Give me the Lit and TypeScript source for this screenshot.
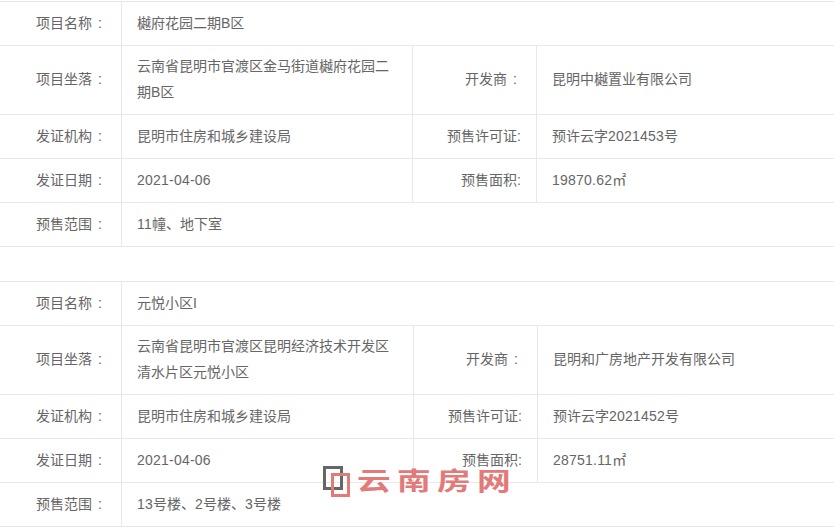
import { LitElement, html, css } from "lit";
import { customElement } from "lit/decorators.js";

interface Project {
  name: string; addr: string[]; dev: string; org: string; permit: string; date: string; area: string; range: string; wide: boolean;
}

const projects: Project[] = [
  { name: "樾府花园二期B区", addr: ["云南省昆明市官渡区金马街道樾府花园二", "期B区"], dev: "昆明中樾置业有限公司", org: "昆明市住房和城乡建设局", permit: "预许云字2021453号", date: "2021-04-06", area: "19870.62㎡", range: "11幢、地下室", wide: false },
  { name: "元悦小区I", addr: ["云南省昆明市官渡区昆明经济技术开发区", "清水片区元悦小区"], dev: "昆明和广房地产开发有限公司", org: "昆明市住房和城乡建设局", permit: "预许云字2021452号", date: "2021-04-06", area: "28751.11㎡", range: "13号楼、2号楼、3号楼", wide: true },
];

@customElement("app-root")
export class AppRoot extends LitElement {
  static styles = css`
    :host {
      display: block; position: relative; width: 834px; height: 528px; overflow: hidden; background: #fff;
      font-family: "Liberation Sans", "Noto Sans CJK SC", sans-serif; font-size: 14px; color: #666;
    }
    .page { display: flex; flex-direction: column; gap: 34px; padding-top: 1px; }
    .table { border-top: 1px solid #e8e8e8; }
    .row { display: grid; grid-template-columns: 121px 291px 124px 1fr; border-bottom: 1px solid #e8e8e8; min-height: 43px; }
    .table.wide .row { grid-template-columns: 121px 292px 124px 1fr; }
    .row.tall { min-height: 68px; }
    .cell { display: flex; align-items: center; line-height: 26px; border-left: 1px solid #e8e8e8; padding: 0 0 2px 15px; }
    .cell.label { justify-content: flex-end; padding: 0 15px 2px 0; }
    .cell.dev { padding-left: 52px; }
    .cell.first { border-left: 0; padding-left: 36px; }
    .cell.span { grid-column: 2 / 5; }
    .colon { margin-left: 6px; }
    .num { letter-spacing: 0.22px; }
    .mark { position: absolute; left: 323px; top: 466px; width: 195px; height: 34px; }
    .mark svg { position: absolute; left: 0; top: 0; }
    .mark span {
      position: absolute; left: 34px; top: -3px; font-size: 25px; line-height: 32px; font-weight: 700;
      color: #e27a7a; white-space: nowrap; letter-spacing: 4.6px; transform: scaleX(1.35); transform-origin: left center;
      font-family: "Noto Sans CJK SC", sans-serif;
    }
  `;

  private digits(text: string) {
    return text.split(/(\d[\d.\-]*)/).map((part, i) => (i % 2 ? html`<span class="num">${part}</span>` : part));
  }

  private first(text: string) {
    return html`<div class="cell first">${text}<span class="colon">:</span></div>`;
  }

  private table(p: Project) {
    return html`<div class="table ${p.wide ? "wide" : ""}">
      <div class="row">${this.first("项目名称")}<div class="cell span">${p.name}</div></div>
      <div class="row tall">${this.first("项目坐落")}
        <div class="cell"><div>${p.addr[0]}<br />${p.addr[1]}</div></div>
        <div class="cell dev">开发商<span class="colon">:</span></div><div class="cell">${p.dev}</div></div>
      <div class="row">${this.first("发证机构")}<div class="cell">${p.org}</div>
        <div class="cell label">预售许可证:</div><div class="cell"><div>${this.digits(p.permit)}</div></div></div>
      <div class="row">${this.first("发证日期")}<div class="cell">${this.digits(p.date)}</div>
        <div class="cell label">预售面积:</div><div class="cell"><div>${this.digits(p.area)}</div></div></div>
      <div class="row">${this.first("预售范围")}<div class="cell span"><div>${this.digits(p.range)}</div></div></div>
    </div>`;
  }

  render() {
    return html`<div class="page">${projects.map((p) => this.table(p))}</div>
      <div class="mark">
        <svg width="30" height="34" viewBox="0 0 30 34">
          <rect x="1.5" y="1.5" width="17" height="21" fill="none" stroke="#666" stroke-width="3" />
          <rect x="9.5" y="8.5" width="16" height="21" fill="none" stroke="#e27a7a" stroke-width="3" />
        </svg>
        <span>云南房网</span>
      </div>`;
  }
}
